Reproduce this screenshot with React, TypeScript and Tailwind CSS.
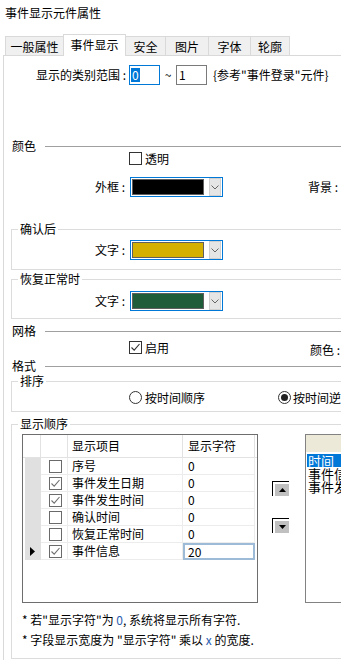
import React from "react";

const Combo = ({ color }: { color: string }) => (
  <div className="flex items-center w-[93px] h-[20px] border border-[#0078d7] bg-white shrink-0">
    <div className="ml-[1px] w-[72px] h-[16px] border border-[#5f5f5f]" style={{ backgroundColor: color }} />
    <div className="ml-[5px] w-[12px] h-[18px] bg-[#e5e5e5] border border-[#d0d0d0] flex items-center justify-center">
      <svg width="8" height="5" viewBox="0 0 8 5">
        <path d="M0.5 0.5 L4 4 L7.5 0.5" fill="none" stroke="#666" strokeWidth="1" />
      </svg>
    </div>
  </div>
);

const Check = ({ checked, gray }: { checked?: boolean; gray?: boolean }) => (
  <div
    className={
      "w-[13px] h-[13px] border bg-white flex items-center justify-center shrink-0 " +
      (gray ? "border-[#6a6a6a]" : "border-[#333333]")
    }
  >
    {checked && (
      <svg width="11" height="11" viewBox="0 0 11 11">
        <path d="M1.5 5.5 L4.2 8.2 L9.5 2" fill="none" stroke={gray ? "#707070" : "#333"} strokeWidth="1.1" />
      </svg>
    )}
  </div>
);

const Radio = ({ on }: { on?: boolean }) => (
  <div className="w-[13px] h-[13px] rounded-full border border-[#333333] bg-white flex items-center justify-center shrink-0">
    {on && <div className="w-[7px] h-[7px] rounded-full bg-[#222222]" />}
  </div>
);

const Section = ({ label, mt }: { label: string; mt: string }) => (
  <div className={"flex items-center h-[12px] pl-[8px] " + mt}>
    <span className="leading-[12px] w-[24px]">{label}</span>
    <div className="ml-[9px] flex-1 h-px bg-[#a0a0a0]" />
  </div>
);

const rows = [
  { name: "序号", checked: false, val: "0" },
  { name: "事件发生日期", checked: true, val: "0" },
  { name: "事件发生时间", checked: true, val: "0" },
  { name: "确认时间", checked: false, val: "0" },
  { name: "恢复正常时间", checked: false, val: "0" },
  { name: "事件信息", checked: true, val: "20", current: true },
];

export default function App() {
  return (
    <div className="w-[341px] h-[660px] overflow-hidden bg-white text-[12px] text-black font-['Noto_Sans_CJK_SC',sans-serif]">
      {/* title */}
      <div className="h-[34px] pl-[5px] pt-[6px] leading-[14px]">事件显示元件属性</div>

      {/* tabs */}
      <div className="h-[21px] flex items-end pl-[5px]">
        <div className="w-[58px] h-[19px] border-l border-t border-[#d9d9d9] bg-[#f0f0f0] flex justify-center pt-[3px] leading-[14px]">一般属性</div>
        <div className="relative z-10 -mb-[1px] w-[63px] h-[22px] border-l border-t border-r border-[#d9d9d9] bg-white flex justify-center pt-[3px] leading-[14px]">事件显示</div>
        <div className="w-[39px] h-[19px] border-t border-[#d9d9d9] bg-[#f0f0f0] flex justify-center pt-[3px] leading-[14px]">安全</div>
        <div className="w-[43px] h-[19px] border-l border-t border-[#d9d9d9] bg-[#f0f0f0] flex justify-center pt-[3px] leading-[14px]">图片</div>
        <div className="w-[42px] h-[19px] border-l border-t border-[#d9d9d9] bg-[#f0f0f0] flex justify-center pt-[3px] leading-[14px]">字体</div>
        <div className="w-[40px] h-[19px] border-l border-t border-r border-[#d9d9d9] bg-[#f0f0f0] flex justify-center pt-[3px] leading-[14px]">轮廓</div>
      </div>

      {/* panel */}
      <div className="ml-[3px] w-[420px] h-[620px] border-l border-t border-[#d9d9d9] bg-white flex flex-col">
        {/* range */}
        <div className="mt-[9px] h-[20px] flex items-center">
          <span className="w-[122px] text-right leading-[14px]">显示的类别范围 :</span>
          <div className="ml-[3px] w-[31px] h-[20px] border border-[#0078d7] flex items-center pl-[1px]">
            <span className="bg-[#0078d7] text-white leading-[14px] px-[1px]">0</span>
          </div>
          <span className="w-[16px] text-center leading-[14px]">~</span>
          <div className="w-[31px] h-[20px] border border-[#7a7a7a] flex items-center pl-[2px] leading-[14px]">1</div>
          <span className="ml-[6px] leading-[14px]">{'{参考"事件登录"元件}'}</span>
        </div>

        {/* 颜色 */}
        <Section label="颜色" mt="mt-[55px]" />
        <div className="h-[13px] flex items-center">
          <div className="ml-[125px]"><Check /></div>
          <span className="ml-[3px] leading-[13px]">透明</span>
        </div>
        <div className="mt-[12px] h-[20px] flex items-center">
          <span className="w-[121px] text-right leading-[14px]">外框 :</span>
          <div className="ml-[5px]"><Combo color="#000000" /></div>
          <span className="ml-[85px] leading-[14px] whitespace-nowrap">背景 :</span>
        </div>

        <fieldset className="mt-[26px] ml-[7px] border border-[#dcdcdc] pt-[5px] pb-[9px] px-0">
          <legend className="ml-[6px] px-[2px] leading-[12px]">确认后</legend>
          <div className="flex items-center h-[20px]">
            <span className="w-[113px] text-right leading-[14px]">文字 :</span>
            <div className="ml-[5px]"><Combo color="#d4b000" /></div>
          </div>
        </fieldset>

        <fieldset className="mt-[3px] ml-[7px] border border-[#dcdcdc] pt-[6px] pb-[7px] px-0">
          <legend className="ml-[6px] px-[2px] leading-[12px]">恢复正常时</legend>
          <div className="flex items-center h-[20px]">
            <span className="w-[113px] text-right leading-[14px]">文字 :</span>
            <div className="ml-[5px]"><Combo color="#1e5c3a" /></div>
          </div>
        </fieldset>

        {/* 网格 */}
        <Section label="网格" mt="mt-[6px]" />
        <div className="mt-[4px] h-[13px] flex items-center">
          <div className="ml-[125px] w-[181px] flex items-center">
            <Check checked />
            <span className="ml-[3px] leading-[13px]">启用</span>
          </div>
          <span className="mt-[3px] leading-[13px] whitespace-nowrap">颜色 :</span>
        </div>

        {/* 格式 */}
        <Section label="格式" mt="mt-[6px]" />

        <fieldset className="mt-[3px] ml-[7px] border border-[#dcdcdc] pt-[4px] pb-[7px] px-0">
          <legend className="ml-[6px] px-[2px] leading-[12px]">排序</legend>
          <div className="flex items-center h-[13px]">
            <div className="ml-[117px] w-[149px] flex items-center">
              <Radio />
              <span className="ml-[3px] leading-[13px]">按时间顺序</span>
            </div>
            <Radio on />
            <span className="ml-[2px] leading-[13px] whitespace-nowrap">按时间逆序</span>
          </div>
        </fieldset>

        <fieldset className="mt-[6px] ml-[7px] border border-[#dcdcdc] pt-[4px] pb-[12px] px-0">
          <legend className="ml-[6px] px-[2px] leading-[12px]">显示顺序</legend>
          <div className="flex items-start">
            {/* grid */}
            <div className="ml-[10px] w-[236px] h-[169px] border border-[#6e6e6e] bg-white flex flex-col shrink-0">
              <div className="h-[23px] flex border-b border-[#e2e2e2]">
                <div className="w-[18px] border-r border-[#e2e2e2]" />
                <div className="w-[27px] border-r border-[#e2e2e2]" />
                <div className="w-[115px] border-r border-[#e2e2e2] pl-[4px] flex items-center leading-[14px]">显示项目</div>
                <div className="w-[72px] border-r border-[#e2e2e2] pl-[5px] flex items-center leading-[14px]">显示字符</div>
              </div>
              {rows.map((r) => (
                <div key={r.name} className="h-[17px] flex">
                  <div className="w-[18px] pl-[2px] flex">
                    <div className="flex-1 bg-[#e0e0e0] flex items-center pl-[5px]">
                      {r.current && (
                        <svg width="5" height="9" viewBox="0 0 5 9">
                          <path d="M0 0 L5 4.5 L0 9 Z" fill="#000" />
                        </svg>
                      )}
                    </div>
                  </div>
                  <div className="w-[27px] border-r border-b border-[#ececec] flex items-center pl-[8px]">
                    <Check checked={r.checked} gray />
                  </div>
                  <div className="w-[115px] border-r border-b border-[#ececec] pl-[4px] flex items-center leading-[14px]">{r.name}</div>
                  {r.current ? (
                    <div className="w-[72px] border-2 border-[#9dbad6] pl-[3px] flex items-center leading-[14px]">{r.val}</div>
                  ) : (
                    <div className="w-[72px] border-r border-b border-[#ececec] pl-[5px] flex items-center leading-[14px]">{r.val}</div>
                  )}
                </div>
              ))}
            </div>

            {/* arrows */}
            <div className="ml-[14px] flex flex-col">
              <div className="mt-[47px] w-[17px] h-[15px] border-l border-t border-black pl-[2px] pt-[2px]">
                <div className="w-[14px] h-[12px] bg-[#c0c0c0] flex items-center justify-center">
                  <svg width="7" height="4" viewBox="0 0 7 4"><path d="M0 4 L3.5 0 L7 4 Z" fill="#000" /></svg>
                </div>
              </div>
              <div className="mt-[22px] w-[17px] h-[15px] border-l border-t border-black pl-[2px] pt-[2px]">
                <div className="w-[14px] h-[12px] bg-[#c0c0c0] flex items-center justify-center">
                  <svg width="7" height="4" viewBox="0 0 7 4"><path d="M0 0 L7 0 L3.5 4 Z" fill="#000" /></svg>
                </div>
              </div>
            </div>

            {/* list */}
            <div className="ml-[16px] w-[100px] h-[169px] border border-[#828282] bg-white flex flex-col shrink-0">
              <div className="h-[17px] bg-[#ece9d8]" />
              <div className="pt-[2px] pl-[1px] text-[13px] leading-[13px]">
                <div className="h-[13px] bg-[#0078d7] text-white pl-[1px]">时间</div>
                <div className="h-[13px] pl-[1px] whitespace-nowrap">事件信息</div>
                <div className="h-[13px] pl-[1px] whitespace-nowrap">事件发生</div>
              </div>
            </div>
          </div>

          <div className="mt-[11px] ml-[10px] leading-[12px] whitespace-nowrap">
            * 若"显示字符"为 <span className="text-[#2a5db0]">0</span>, 系统将显示所有字符.
          </div>
          <div className="mt-[8px] ml-[10px] leading-[12px] whitespace-nowrap">
            * 字段显示宽度为 "显示字符" 乘以 <span className="text-[#2a5db0]">x</span> 的宽度.
          </div>
        </fieldset>
      </div>
    </div>
  );
}
